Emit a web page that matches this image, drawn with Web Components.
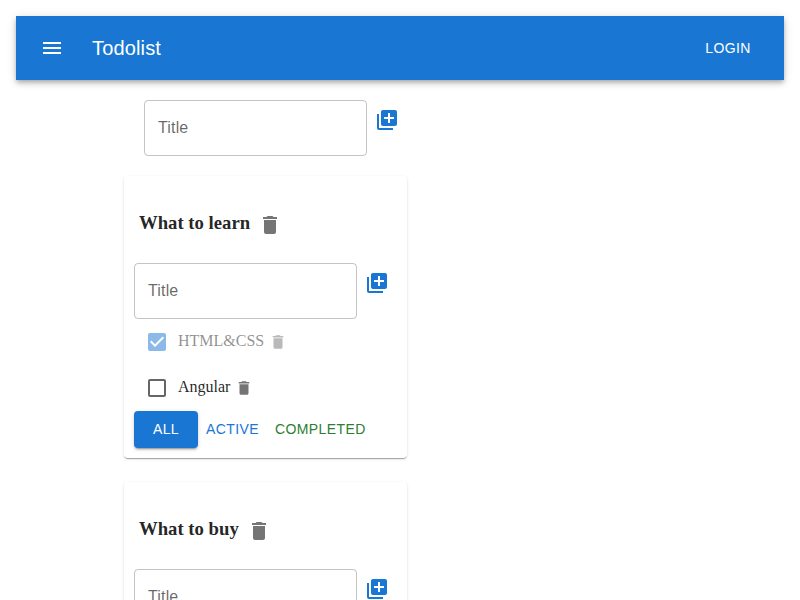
<!DOCTYPE html>
<html lang="en">
<head>
<meta charset="utf-8">
<title>Todolist</title>
<style>
html{overflow:hidden}
body{margin:0;padding:16px 16px 0;height:600px;box-sizing:border-box;overflow:hidden;background:#fff;color:rgba(0,0,0,.87);font:16px "Liberation Serif",serif}
main{padding:20px 0 0 108px}
.new{display:flex;padding-left:20px;margin-bottom:20px}
.lists{display:flex;flex-direction:column;align-items:flex-start;gap:24px}
</style>
</head>
<body>
<app-bar>Todolist<span slot="action">Login</span></app-bar>
<main>
  <add-item-form class="new"></add-item-form>
  <div class="lists">
    <todo-list heading="What to learn" filters>
      <todo-task done>HTML&amp;CSS</todo-task>
      <todo-task>Angular</todo-task>
    </todo-list>
    <todo-list heading="What to buy"></todo-list>
  </div>
</main>
<script>
const paths = {
  menu: 'M3 18h18v-2H3zm0-5h18v-2H3zm0-7v2h18V6z',
  add: 'M4 6H2v14c0 1.100.9 2 2 2h14v-2H4zm16-4H8c-1.100 0-2 .9-2 2v12c0 1.100.9 2 2 2h12c1.100 0 2-.9 2-2V4c0-1.100-.9-2-2-2m-1 9h-4v4h-2v-4H9V9h4V5h2v4h4z',
  trash: 'M6 19c0 1.100.9 2 2 2h8c1.100 0 2-.9 2-2V7H6zM19 4h-3.500l-1-1h-5l-1 1H5v2h14z',
  checked: 'M19 3H5c-1.110 0-2 .9-2 2v14c0 1.100.89 2 2 2h14c1.110 0 2-.9 2-2V5c0-1.100-.89-2-2-2m-9 14-5-5 1.410-1.410L10 14.170l7.590-7.590L19 8z',
  unchecked: 'M19 5v14H5V5zm0-2H5c-1.100 0-2 .9-2 2v14c0 1.100.9 2 2 2h14c1.100 0 2-.9 2-2V5c0-1.100-.9-2-2-2'
};

function define(name, render) {
  customElements.define(name, class extends HTMLElement {
    connectedCallback() {
      if (!this.shadowRoot) this.attachShadow({mode: 'open'}).innerHTML = render(this);
    }
  });
}

define('ui-icon', el => `
  <style>
    :host{display:block;width:24px;height:24px;flex:none}
    svg{display:block;width:100%;height:100%;fill:currentColor}
  </style>
  <svg viewBox="0 0 24 24"><path d="${paths[el.getAttribute('name')]}"/></svg>`);

define('ui-button', () => `
  <style>
    :host{display:flex;box-sizing:border-box;min-width:64px;height:36.5px;padding:6px 8px;align-items:center;justify-content:center;border-radius:4px;font:14px/24.5px "Liberation Sans",Arial,sans-serif;letter-spacing:.4px;text-transform:uppercase;cursor:pointer}
    :host([contained]){background:#1976d2;color:#fff;box-shadow:0 3px 1px -2px rgba(0,0,0,.2),0 2px 2px rgba(0,0,0,.14),0 1px 5px rgba(0,0,0,.12)}
  </style><slot></slot>`);

define('app-bar', () => `
  <style>
    :host{display:flex;box-sizing:border-box;height:64px;padding:0 24px;align-items:center;background:#1976d2;color:#fff;box-shadow:0 2px 4px -1px rgba(0,0,0,.2),0 4px 5px rgba(0,0,0,.14),0 1px 10px rgba(0,0,0,.12)}
    .name{flex:1;margin-left:28px;font:20px/32px "Liberation Sans",Arial,sans-serif;letter-spacing:.15px}
  </style>
  <ui-icon name="menu"></ui-icon><div class="name"><slot></slot></div>
  <ui-button><slot name="action"></slot></ui-button>`);

define('add-item-form', () => `
  <style>
    :host{display:flex;align-items:flex-start}
    .field{box-sizing:border-box;width:223px;height:56px;padding:15px 13px;border:1px solid rgba(0,0,0,.23);border-radius:4px;color:rgba(0,0,0,.6);font:16px/23px "Liberation Sans",Arial,sans-serif;letter-spacing:.15px}
    ui-icon{padding:8px;color:#1976d2}
  </style>
  <div class="field">Title</div><ui-icon name="add"></ui-icon>`);

define('todo-task', el => `
  <style>
    :host{display:flex;height:46px;align-items:center}
    :host([done]){opacity:.5}
    .box{margin:0 9px 0 11px;color:rgba(0,0,0,.6)}
    :host([done]) .box{color:#1976d2}
    .label{line-height:18px;margin-bottom:3px}
    .trash{width:18px;height:18px;margin-left:5px;color:rgba(0,0,0,.54)}
  </style>
  <ui-icon class="box" name="${el.hasAttribute('done') ? 'checked' : 'unchecked'}"></ui-icon>
  <span class="label"><slot></slot></span><ui-icon class="trash" name="trash"></ui-icon>`);

define('todo-list', el => `
  <style>
    :host{display:block;box-sizing:border-box;width:283px;height:282px;padding:10px;border-radius:4px;background:#fff;box-shadow:0 2px 1px -1px rgba(0,0,0,.2),0 1px 1px rgba(0,0,0,.14),0 1px 3px rgba(0,0,0,.12)}
    header{display:flex;height:77px;padding-left:5px;align-items:center}
    h3{margin:0 8px 3px 0;font-size:18.72px;line-height:22px}
    header ui-icon{color:rgba(0,0,0,.54)}
    .filters{display:flex}
    .active{color:#1976d2}
    .completed{color:#2e7d32}
  </style>
  <header><h3>${el.getAttribute('heading')}</h3><ui-icon name="trash"></ui-icon></header>
  <add-item-form></add-item-form>
  <slot></slot>
  ${el.hasAttribute('filters') ? '<div class="filters"><ui-button contained>All</ui-button><ui-button class="active">Active</ui-button><ui-button class="completed">Completed</ui-button></div>' : ''}`);
</script>
</body>
</html>
